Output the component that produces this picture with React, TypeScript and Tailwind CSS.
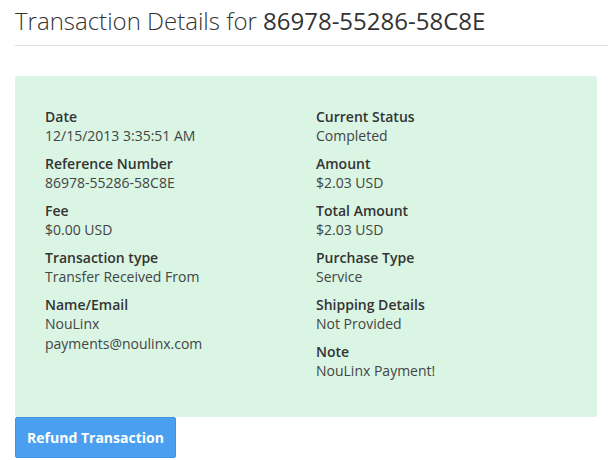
import React from "react";

const leftItems = [
  { label: "Date", value: ["12/15/2013 3:35:51 AM"] },
  { label: "Reference Number", value: ["86978-55286-58C8E"] },
  { label: "Fee", value: ["$0.00 USD"] },
  { label: "Transaction type", value: ["Transfer Received From"] },
  { label: "Name/Email", value: ["NouLinx", "payments@noulinx.com"] },
];

const rightItems = [
  { label: "Current Status", value: ["Completed"] },
  { label: "Amount", value: ["$2.03 USD"] },
  { label: "Total Amount", value: ["$2.03 USD"] },
  { label: "Purchase Type", value: ["Service"] },
  { label: "Shipping Details", value: ["Not Provided"] },
  { label: "Note", value: ["NouLinx Payment!"] },
];

function Field({ label, value }: { label: string; value: string[] }) {
  return (
    <div className="mb-[9px]">
      <div className="text-[14px] leading-[18px] font-semibold text-[#333]">{label}</div>
      {value.map((v) => (
        <div key={v} className="text-[14px] leading-[20px] text-[#444]">
          {v}
        </div>
      ))}
    </div>
  );
}

export default function App() {
  return (
    <div className="min-h-screen bg-white pl-[15px] font-['Open_Sans',sans-serif] text-[#333]">
      <h1 className="pt-[6px] pb-[9px] text-[24px] leading-[30px] text-[#333]">
        <span className="font-light">Transaction Details for </span>
        <span className="font-normal">86978-55286-58C8E</span>
      </h1>
      <div className="h-px bg-[#dddddd]" />

      <div className="mt-[30px] mr-[11px] rounded-[2px] bg-[#daf5e3] pt-[32px] pb-[27px] pl-[30px]">
        <div className="grid grid-cols-[271px_1fr]">
          <div>
            {leftItems.map((it) => (
              <Field key={it.label} label={it.label} value={it.value} />
            ))}
          </div>
          <div>
            {rightItems.map((it) => (
              <Field key={it.label} label={it.label} value={it.value} />
            ))}
          </div>
        </div>
      </div>

      <button className="h-[41px] w-[161px] rounded-[2px] border border-[#3d93e6] bg-[#4a9ff0] text-[14px] font-bold text-white">
        Refund Transaction
      </button>
    </div>
  );
}
